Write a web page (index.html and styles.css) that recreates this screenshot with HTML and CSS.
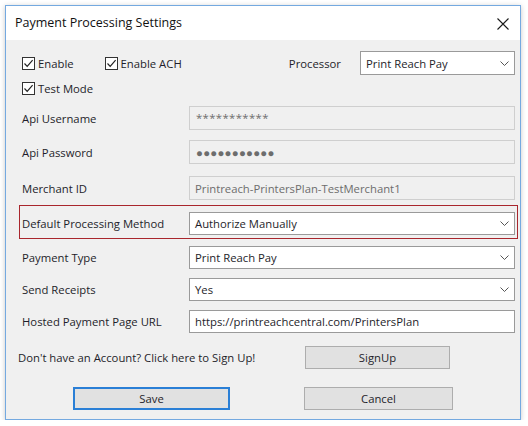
FILE: index.html
```html
<!DOCTYPE html>
<html lang="en">
<head>
<meta charset="utf-8">
<title>Payment Processing Settings</title>
<link rel="stylesheet" href="styles.css">
</head>
<body>
<div class="window">
  <div class="titlebar">
    <span class="title">Payment Processing Settings</span>
    <svg class="close" width="12" height="12" viewBox="0 0 12 12"><path d="M0.5 0.5 L11.5 11.5 M11.5 0.5 L0.5 11.5" stroke="#1a1a1a" stroke-width="1.1" fill="none"/></svg>
  </div>
  <div class="content">
    <div class="row-top">
      <label class="check"><span class="box"><svg width="11" height="11" viewBox="0 0 11 11"><path d="M1.5 5.5 L4.2 8.3 L9.6 2.2" stroke="#222" stroke-width="1.2" fill="none"/></svg></span>Enable</label>
      <label class="check ach"><span class="box"><svg width="11" height="11" viewBox="0 0 11 11"><path d="M1.5 5.5 L4.2 8.3 L9.6 2.2" stroke="#222" stroke-width="1.2" fill="none"/></svg></span>Enable ACH</label>
      <span class="proc-label">Processor</span>
      <div class="select proc">Print Reach Pay<svg class="chev" width="9" height="5" viewBox="0 0 9 5"><path d="M0.5 0.5 L4.5 4.5 L8.5 0.5" stroke="#555" stroke-width="1" fill="none"/></svg></div>
    </div>
    <div class="row-test">
      <label class="check"><span class="box"><svg width="11" height="11" viewBox="0 0 11 11"><path d="M1.5 5.5 L4.2 8.3 L9.6 2.2" stroke="#222" stroke-width="1.2" fill="none"/></svg></span>Test Mode</label>
    </div>

    <div class="fields">
      <div class="field f-user">
        <span class="label">Api Username</span>
        <div class="input disabled stars">***********</div>
      </div>
      <div class="field f-pass">
        <span class="label">Api Password</span>
        <div class="input disabled dots">●●●●●●●●●●●</div>
      </div>
      <div class="field f-merchant">
        <span class="label">Merchant ID</span>
        <div class="input disabled">Printreach-PrintersPlan-TestMerchant1</div>
      </div>
      <div class="field f-method highlight">
        <span class="label">Default Processing Method</span>
        <div class="select">Authorize Manually<svg class="chev" width="9" height="5" viewBox="0 0 9 5"><path d="M0.5 0.5 L4.5 4.5 L8.5 0.5" stroke="#555" stroke-width="1" fill="none"/></svg></div>
      </div>
      <div class="field f-type">
        <span class="label">Payment Type</span>
        <div class="select">Print Reach Pay<svg class="chev" width="9" height="5" viewBox="0 0 9 5"><path d="M0.5 0.5 L4.5 4.5 L8.5 0.5" stroke="#555" stroke-width="1" fill="none"/></svg></div>
      </div>
      <div class="field f-receipts">
        <span class="label">Send Receipts</span>
        <div class="select">Yes<svg class="chev" width="9" height="5" viewBox="0 0 9 5"><path d="M0.5 0.5 L4.5 4.5 L8.5 0.5" stroke="#555" stroke-width="1" fill="none"/></svg></div>
      </div>
      <div class="field f-url">
        <span class="label">Hosted Payment Page URL</span>
        <div class="input text">https://printreachcentral.com/PrintersPlan</div>
      </div>
    </div>

    <div class="signup-row">
      <span class="signup-text">Don't have an Account? Click here to Sign Up!</span>
      <button class="btn signup">SignUp</button>
    </div>
    <div class="actions">
      <button class="btn save">Save</button>
      <button class="btn cancel">Cancel</button>
    </div>
  </div>
</div>
</body>
</html>
```

FILE: styles.css
```css
* { box-sizing: border-box; }

html, body {
  margin: 0;
  padding: 0;
  background: #ffffff;
}

body {
  font-family: "Open Sans", "Noto Sans", sans-serif;
  font-size: 11.3px;
  color: #1e1e2a;
}

.window {
  margin: 5px 0 0 5px;
  width: 516px;
  height: 415px;
  border: 1px solid #74a9e0;
  background: #f0f0f0;
  box-shadow: 0 1px 5px rgba(0, 0, 0, 0.22);
  display: flex;
  flex-direction: column;
}

/* title bar */
.titlebar {
  height: 34px;
  background: #ffffff;
  display: flex;
  align-items: center;
  padding: 0 10px 0 9px;
  flex: none;
}
.title {
  font-size: 12.5px;
  color: #111;
  flex: 1;
  padding-bottom: 2px;
}
.close {
  margin-right: 1px;
  margin-top: 1px;
}

.content {
  flex: 1;
  display: flex;
  flex-direction: column;
}

/* checkbox rows */
.row-top {
  margin-top: 11px;
  height: 24px;
  display: flex;
  align-items: center;
  padding: 0 5px 0 16px;
}
.check {
  display: flex;
  align-items: center;
  gap: 3px;
}
.box {
  width: 13px;
  height: 13px;
  border: 1px solid #333;
  background: #fff;
  display: flex;
  align-items: center;
  justify-content: center;
}
.check.ach { margin-left: 31px; }
.proc-label {
  margin-left: auto;
  margin-right: 19px;
}
.select.proc {
  flex: none;
  width: 155px;
  height: 24px;
}

.row-test {
  margin-top: 6px;
  height: 15px;
  display: flex;
  align-items: center;
  padding-left: 16px;
}

/* labelled fields */
.fields {
  display: flex;
  flex-direction: column;
  padding: 0 5px 0 16px;
  margin-top: 10px;
}
.field {
  display: flex;
  align-items: center;
}
.label {
  width: 167px;
  flex: none;
}
.input, .select {
  flex: 1;
  height: 24px;
  display: flex;
  align-items: center;
  padding: 0 5px;
  white-space: nowrap;
}
.input.disabled {
  background: #f0f0f0;
  border: 1px solid #cfcfcf;
  color: #6d6d6d;
}
.input.text {
  background: #fff;
  border: 1px solid #9a9a9a;
  color: #1e1e2a;
  height: 23px;
}
.select {
  background: #fff;
  border: 1px solid #9a9a9a;
  height: 23px;
  justify-content: space-between;
  padding-right: 5px;
}
.chev { flex: none; }

.stars {
  color: #a0a0a0;
  letter-spacing: 0.4px;
  align-items: flex-start;
  padding-top: 3px;
  padding-left: 6px;
}
.dots {
  color: #505050;
  font-size: 11.5px;
  letter-spacing: 0.2px;
  padding-left: 6px;
}

.f-user { margin-top: 0; }
.f-pass { margin-top: 10px; }
.f-merchant { margin-top: 12px; }
.f-type { margin-top: 7px; }
.f-receipts { margin-top: 9px; }
.f-url { margin-top: 9px; }

.highlight {
  margin: 5px -3px 0 -3px;
  padding: 6px 2px 3px 2px;
  border: 1px solid #a9262d;
}
.highlight .select { height: 23px; }

/* sign up + actions */
.signup-row {
  margin-top: 13px;
  display: flex;
  align-items: center;
  padding-left: 12px;
}
.signup-text {
  width: 287px;
  flex: none;
}
.btn {
  font-family: inherit;
  font-size: 11.3px;
  color: #1e1e2a;
  background: #e1e1e1;
  border: 1px solid #adadad;
  height: 23px;
  padding: 0;
}
.btn.signup { width: 145px; }

.actions {
  margin-top: 18px;
  display: flex;
  padding-left: 67px;
}
.btn.save {
  width: 157px;
  border: 2px solid #2a7fd6;
}
.btn.cancel {
  width: 149px;
  margin-left: 74px;
}
```
